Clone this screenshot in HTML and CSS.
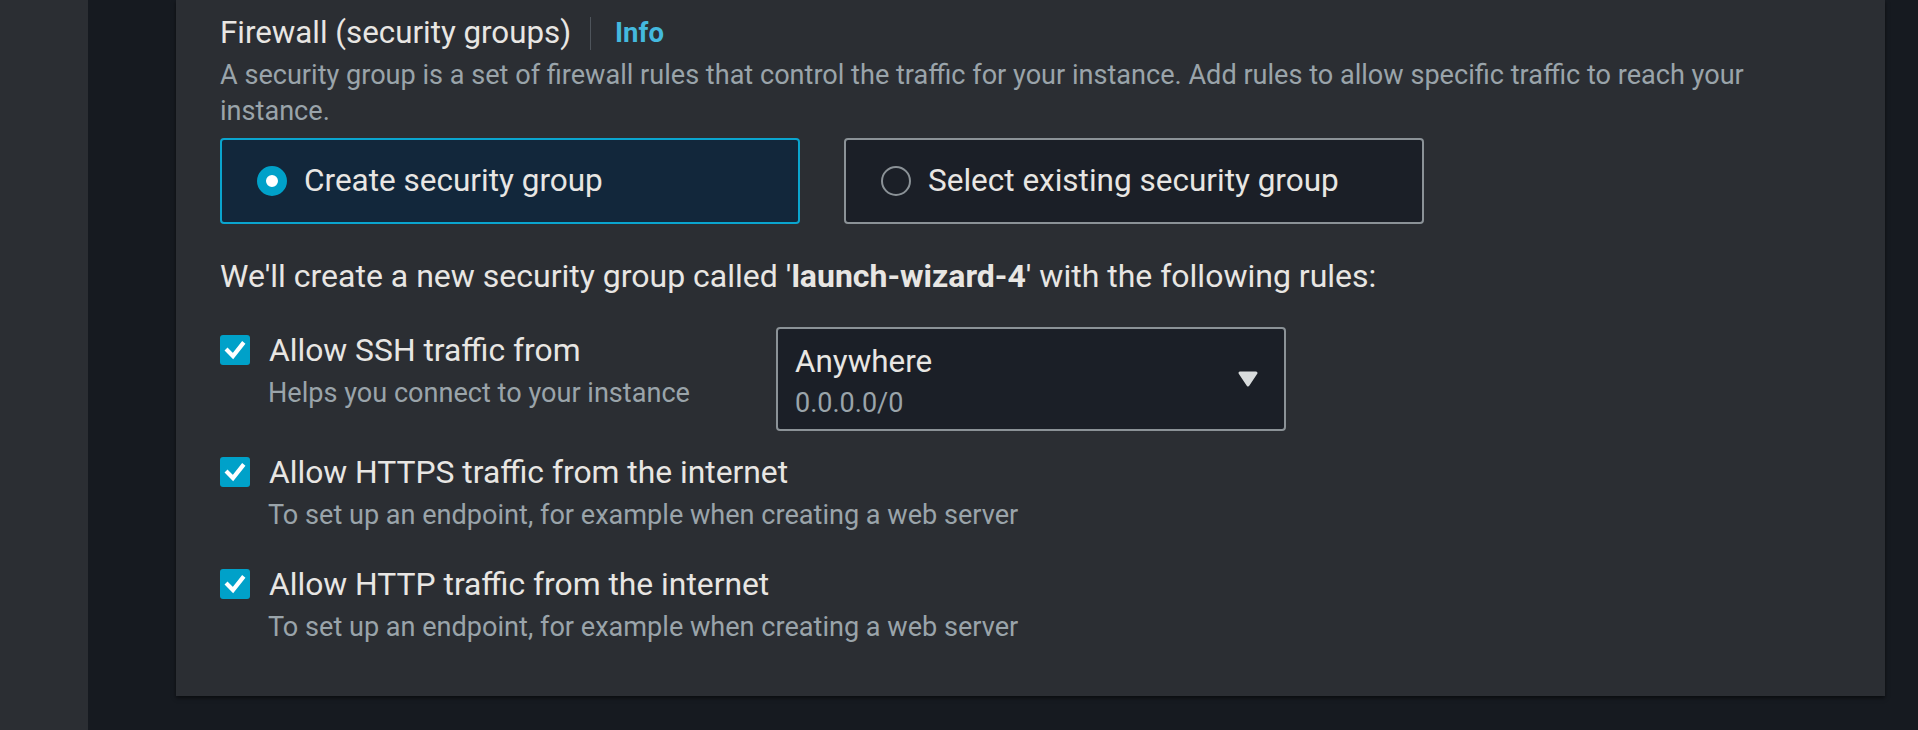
FILE: index.html
```html
<!DOCTYPE html>
<html lang="en">
<head>
<meta charset="utf-8">
<title>Firewall (security groups)</title>
<link rel="stylesheet" href="styles.css">
</head>
<body>
<div class="layout">
  <div class="sidebar"></div>
  <main class="main">
    <section class="panel">
      <div class="header">
        <span class="title">Firewall (security groups)</span>
        <span class="sep"></span>
        <a class="info">Info</a>
      </div>
      <p class="desc">A security group is a set of firewall rules that control the traffic for your instance. Add rules to allow specific traffic to reach your instance.</p>
      <div class="tiles">
        <div class="tile tile-on">
          <span class="radio radio-on"></span>
          <span class="tile-label">Create security group</span>
        </div>
        <div class="tile">
          <span class="radio"></span>
          <span class="tile-label">Select existing security group</span>
        </div>
      </div>
      <p class="intro">We'll create a new security group called '<b>launch-wizard-4</b>' with the following rules:</p>
      <div class="rules">
        <div class="rule rule-ssh">
          <div class="rule-left">
            <div class="check-row">
              <span class="checkbox"><svg viewBox="0 0 30 30" width="30" height="30"><path d="M7.5 15.5 L13 21 L22.5 9" fill="none" stroke="#fff" stroke-width="4.2" stroke-linecap="square" stroke-linejoin="miter"/></svg></span>
              <span class="label">Allow SSH traffic from</span>
            </div>
            <div class="sub">Helps you connect to your instance</div>
          </div>
          <div class="select">
            <div class="select-text">
              <div class="select-value">Anywhere</div>
              <div class="select-sub">0.0.0.0/0</div>
            </div>
            <svg class="caret" viewBox="0 0 22 18" width="22" height="18"><path d="M3 3 H19 L11 15 Z" fill="#d9dcdd" stroke="#d9dcdd" stroke-width="3" stroke-linejoin="round"/></svg>
          </div>
        </div>
        <div class="rule rule-https">
          <div class="check-row">
            <span class="checkbox"><svg viewBox="0 0 30 30" width="30" height="30"><path d="M7.5 15.5 L13 21 L22.5 9" fill="none" stroke="#fff" stroke-width="4.2" stroke-linecap="square" stroke-linejoin="miter"/></svg></span>
            <span class="label">Allow HTTPS traffic from the internet</span>
          </div>
          <div class="sub">To set up an endpoint, for example when creating a web server</div>
        </div>
        <div class="rule rule-http">
          <div class="check-row">
            <span class="checkbox"><svg viewBox="0 0 30 30" width="30" height="30"><path d="M7.5 15.5 L13 21 L22.5 9" fill="none" stroke="#fff" stroke-width="4.2" stroke-linecap="square" stroke-linejoin="miter"/></svg></span>
            <span class="label">Allow HTTP traffic from the internet</span>
          </div>
          <div class="sub">To set up an endpoint, for example when creating a web server</div>
        </div>
      </div>
    </section>
  </main>
</div>
</body>
</html>
```

FILE: styles.css
```css
html, body {
  margin: 0;
  padding: 0;
  background: #161a20;
  font-family: Roboto, "Liberation Sans", sans-serif;
  color: #e8e6e3;
}
.layout {
  display: flex;
  width: 1918px;
  height: 730px;
  overflow: hidden;
}
.sidebar {
  flex: 0 0 88px;
  background: #2b2e33;
}
.main {
  flex: 1;
  padding: 0 33px 0 88px;
}
.panel {
  background: #2b2e33;
  padding: 11px 44px 51px;
  box-shadow: 0 2px 4px rgba(0, 0, 0, 0.55);
}
.header {
  display: flex;
  align-items: center;
  height: 44px;
}
.title {
  font-size: 31.3px;
  line-height: 44px;
}
.sep {
  width: 1px;
  height: 33px;
  background: #4e545b;
  margin: 0 24px 0 19px;
}
.info {
  font-size: 27.5px;
  font-weight: 700;
  color: #44b9de;
  line-height: 44px;
}
.desc {
  margin: 2px 0 0;
  font-size: 27.1px;
  line-height: 36px;
  color: #9aa4aa;
}
.tiles {
  display: flex;
  gap: 44px;
  margin-top: 9px;
}
.tile {
  box-sizing: border-box;
  width: 580px;
  height: 86px;
  display: flex;
  align-items: center;
  gap: 17px;
  padding-left: 35px;
  border: 2px solid #8b9297;
  border-radius: 4px;
  background: #1b1f27;
}
.tile-on {
  border-color: #0aa5cf;
  background: #12273b;
}
.tile-label {
  font-size: 31.5px;
  line-height: 40px;
}
.radio {
  box-sizing: border-box;
  width: 30px;
  height: 30px;
  border-radius: 50%;
  border: 2px solid #8b9297;
  flex: 0 0 30px;
}
.radio-on {
  border: 9px solid #00a1c9;
  background: #ffffff;
}
.intro {
  margin: 32px 0 0;
  font-size: 32px;
  line-height: 40px;
}
.intro b {
  font-weight: 700;
}
.rules {
  display: flex;
  flex-direction: column;
  margin-top: 31px;
}
.rule-ssh {
  display: flex;
  align-items: flex-start;
}
.rule-left {
  flex: 0 0 556px;
  padding-top: 3px;
}
.rule-https {
  margin-top: 21px;
}
.rule-http {
  margin-top: 31px;
}
.check-row {
  display: flex;
  align-items: center;
  gap: 19px;
  height: 40px;
}
.checkbox {
  width: 30px;
  height: 30px;
  flex: 0 0 30px;
  border-radius: 3px;
  background: #00a1c9;
  display: block;
}
.checkbox svg {
  display: block;
}
.label {
  font-size: 31.8px;
  line-height: 40px;
}
.sub {
  margin: 5px 0 0 48px;
  font-size: 27.1px;
  line-height: 36px;
  color: #9aa4aa;
}
.select {
  box-sizing: border-box;
  width: 510px;
  height: 104px;
  border: 2px solid #8b9297;
  border-radius: 4px;
  background: #1b1f27;
  display: flex;
  align-items: center;
  justify-content: space-between;
  padding: 0 25px 0 17px;
}
.select-text {
  padding-top: 4px;
}
.select-value {
  font-size: 31.4px;
  line-height: 40px;
}
.select-sub {
  font-size: 27px;
  line-height: 36px;
  color: #9aa4aa;
  margin-top: 3px;
}
.caret {
  display: block;
}
```
